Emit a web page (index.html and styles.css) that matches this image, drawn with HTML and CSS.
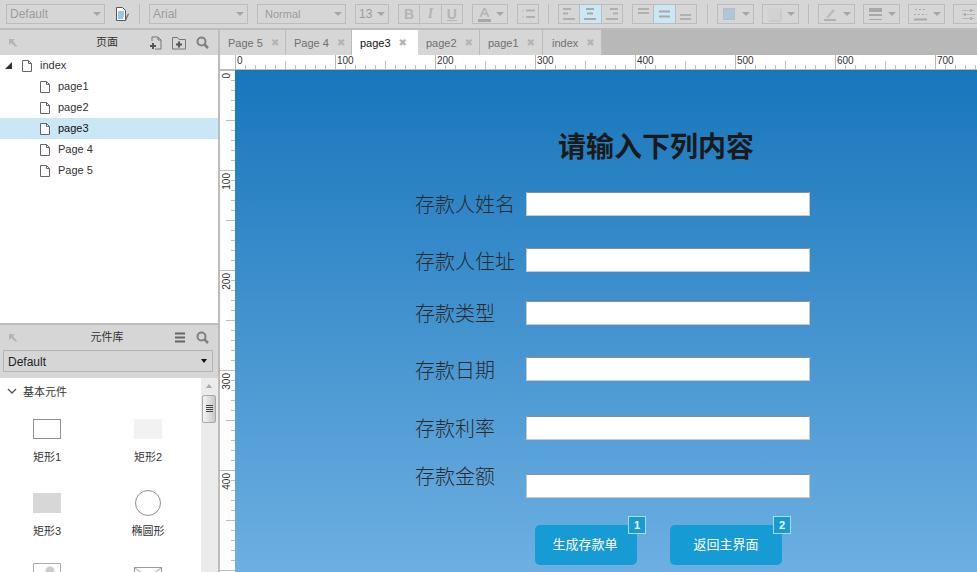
FILE: index.html
```html
<!DOCTYPE html>
<html>
  <head>
    <meta charset="utf-8">
    <link rel="stylesheet" href="styles.css">
  </head>
  <body>
    <div class="toolbar">
      <div class="select w-style">Default<i class="caret"></i></div>
      <svg class="doc-tool" width="16" height="16" viewBox="0 0 16 16"><path d="M2.500 1.500h6l3 3v10h-9z" fill="#fff" stroke="#555"/><path d="M4 6h6M4 8h6M4 10h6M4 12h5" stroke="#2b8fd0"/><path d="M11 14l3-6.500 1 .5-3 6.500z" fill="#666"/></svg>
      <div class="sep"></div>
      <div class="select w-font">Arial<i class="caret"></i></div>
      <div class="select w-weight">Normal<i class="caret"></i></div>
      <div class="select w-size">13<i class="caret"></i></div>
      <div class="btn-group">
        <div class="tb-btn bold">B</div>
        <div class="tb-btn italic">I</div>
        <div class="tb-btn under">U</div>
      </div>
      <div class="select w-color">
        <svg width="13" height="15" viewBox="0 0 13 15"><path d="M1.500 10l4-9h2l4 9H9.500l-1-2.500h-4L3.500 10zM5.200 6h2.600L6.500 2.800z" fill="#b4b4b4"/><path d="M0 12h13v3H0z" fill="#a8a8a8"/></svg>
        <i class="caret"></i>
      </div>
      <div class="tb-btn solo">
        <svg width="13" height="10" viewBox="0 0 13 10"><path d="M0 1.500h2M0 8h2" stroke="#a8d4e6" stroke-width="2"/><path d="M4 1.500h9M4 8h9" stroke="#b0b0b0" stroke-width="2"/></svg>
      </div>
      <div class="sep"></div>
      <div class="btn-group">
        <div class="tb-btn"><svg width="12" height="12" viewBox="0 0 12 12"><path d="M0 1h8M0 5.500h5M0 11h12" stroke="#b0b0b0" stroke-width="2"/></svg></div>
        <div class="tb-btn on"><svg width="12" height="12" viewBox="0 0 12 12"><path d="M2 1h8M3 5.500h6M0 11h12" stroke="#a8a8a8" stroke-width="2"/></svg></div>
        <div class="tb-btn"><svg width="12" height="12" viewBox="0 0 12 12"><path d="M4 1h8M7 5.500h5M0 11h12" stroke="#b0b0b0" stroke-width="2"/></svg></div>
      </div>
      <div class="btn-group">
        <div class="tb-btn"><svg width="11" height="12" viewBox="0 0 11 12"><path d="M0 1h11M0 5h11" stroke="#b0b0b0" stroke-width="2"/></svg></div>
        <div class="tb-btn on"><svg width="11" height="12" viewBox="0 0 11 12"><path d="M0 3.500h11M0 8.500h11" stroke="#a8a8a8" stroke-width="2"/></svg></div>
        <div class="tb-btn"><svg width="11" height="12" viewBox="0 0 11 12"><path d="M0 7h11M0 11h11" stroke="#b0b0b0" stroke-width="2"/></svg></div>
      </div>
      <div class="sep push"></div>
      <div class="select w-tool"><i class="swatch"></i><i class="caret"></i></div>
      <div class="select w-tool"><i class="swatch shadow"></i><i class="caret"></i></div>
      <div class="sep"></div>
      <div class="select w-tool">
        <svg width="13" height="13" viewBox="0 0 13 13"><path d="M3 8l6-7 2 1.500-6 7-3 1z" fill="#bdbdbd"/><path d="M0 11h12v2H0z" fill="#b0b0b0"/></svg>
        <i class="caret"></i>
      </div>
      <div class="select w-tool">
        <svg width="13" height="13" viewBox="0 0 13 13"><path d="M0 0h13v4H0zM0 6h13v2H0zM0 11h13v1H0z" fill="#a8a8a8"/></svg>
        <i class="caret"></i>
      </div>
      <div class="select w-tool">
        <svg width="13" height="13" viewBox="0 0 13 13"><path d="M1 1.500h11M0 6.500h13" stroke="#a8a8a8" stroke-dasharray="2 2"/><path d="M0 11.500h13" stroke="#a8a8a8" stroke-width="2"/></svg>
        <i class="caret"></i>
      </div>
      <div class="tb-btn solo last">
        <svg width="13" height="13" viewBox="0 0 13 13"><path d="M0 2.500h13M0 6.500h13M0 10.500h13" stroke="#b8b8b8"/><path d="M9 1v3M3 5v3M9 9v3" stroke="#b0b0b0" stroke-width="2"/></svg>
      </div>
    </div>

    <div class="main">
      <div class="sidebar">
        <div class="pages-panel">
          <div class="panel-head">
            <svg class="pin" width="10" height="10" viewBox="0 0 10 10"><path d="M1 1h6L5 3l4 5-1 1-5-4-2 2z" fill="#b4b4b4"/></svg>
            <span class="panel-title">页面</span>
            <div class="head-tools">
              <svg width="14" height="14" viewBox="0 0 14 14"><path d="M3 5V1h6l3 3v9H6" fill="none" stroke="#777"/><path d="M9 1v3h3" fill="none" stroke="#777"/><path d="M1 10h6M4 7v6" stroke="#555" stroke-width="2"/></svg>
              <svg width="14" height="14" viewBox="0 0 14 14"><path d="M.5 13V1.500h5l1.500 2h6.500V13z" fill="none" stroke="#777"/><path d="M4 8.500h6M7 5.500v6" stroke="#555" stroke-width="2"/></svg>
              <svg class="search" width="13" height="13" viewBox="0 0 13 13"><circle cx="5.500" cy="5.500" r="4" fill="none" stroke="#808080" stroke-width="2"/><path d="M8.500 8.500l3.500 3.500" stroke="#808080" stroke-width="2.500"/></svg>
            </div>
          </div>
          <div class="tree">
            <div class="tree-row root"><i class="tree-arrow"></i><svg width="10" height="12" viewBox="0 0 10 12"><path d="M.5.500h6l3 3v8h-9z" fill="#fff" stroke="#666"/><path d="M6.500.500v3h3" fill="none" stroke="#666"/></svg><span>index</span></div>
            <div class="tree-row"><svg width="10" height="12" viewBox="0 0 10 12"><path d="M.5.500h6l3 3v8h-9z" fill="#fff" stroke="#666"/><path d="M6.500.500v3h3" fill="none" stroke="#666"/></svg><span>page1</span></div>
            <div class="tree-row"><svg width="10" height="12" viewBox="0 0 10 12"><path d="M.5.500h6l3 3v8h-9z" fill="#fff" stroke="#666"/><path d="M6.500.500v3h3" fill="none" stroke="#666"/></svg><span>page2</span></div>
            <div class="tree-row selected"><svg width="10" height="12" viewBox="0 0 10 12"><path d="M.5.500h6l3 3v8h-9z" fill="#fff" stroke="#666"/><path d="M6.500.500v3h3" fill="none" stroke="#666"/></svg><span>page3</span></div>
            <div class="tree-row"><svg width="10" height="12" viewBox="0 0 10 12"><path d="M.5.500h6l3 3v8h-9z" fill="#fff" stroke="#666"/><path d="M6.500.500v3h3" fill="none" stroke="#666"/></svg><span>Page 4</span></div>
            <div class="tree-row"><svg width="10" height="12" viewBox="0 0 10 12"><path d="M.5.500h6l3 3v8h-9z" fill="#fff" stroke="#666"/><path d="M6.500.500v3h3" fill="none" stroke="#666"/></svg><span>Page 5</span></div>
          </div>
        </div>

        <div class="library-panel">
          <div class="panel-head">
            <svg class="pin" width="10" height="10" viewBox="0 0 10 10"><path d="M1 1h6L5 3l4 5-1 1-5-4-2 2z" fill="#b4b4b4"/></svg>
            <span class="panel-title">元件库</span>
            <div class="head-tools">
              <svg width="12" height="11" viewBox="0 0 12 11"><path d="M1 1.500h10M1 5.500h10M1 9.500h10" stroke="#666" stroke-width="2"/></svg>
              <svg class="search" width="13" height="13" viewBox="0 0 13 13"><circle cx="5.500" cy="5.500" r="4" fill="none" stroke="#808080" stroke-width="2"/><path d="M8.500 8.500l3.500 3.500" stroke="#808080" stroke-width="2.500"/></svg>
            </div>
          </div>
          <div class="lib-select-wrap">
            <div class="lib-select"><span>Default</span><i class="lib-caret"></i></div>
          </div>
          <div class="lib-body">
            <div class="lib-list">
              <div class="lib-group">
                <svg width="10" height="6" viewBox="0 0 10 6"><path d="M1 1l4 4 4-4" fill="none" stroke="#555" stroke-width="1.300"/></svg>
                基本元件
              </div>
              <div class="lib-grid">
                <div class="lib-item"><div class="thumb"><i class="shape rect1"></i></div>矩形1</div>
                <div class="lib-item"><div class="thumb"><i class="shape rect2"></i></div>矩形2</div>
                <div class="lib-item"><div class="thumb"><i class="shape rect3"></i></div>矩形3</div>
                <div class="lib-item"><div class="thumb"><i class="shape ellipse"></i></div>椭圆形</div>
                <div class="lib-item"><div class="thumb">
                  <svg width="28" height="28" viewBox="0 0 28 28"><path d="M.5.500h27v27H.5z" fill="#fff" stroke="#aaa"/><circle cx="17" cy="8" r="4.500" fill="#ccc"/></svg>
                </div></div>
                <div class="lib-item"><div class="thumb">
                  <svg width="28" height="20" viewBox="0 0 28 20"><path d="M.5.500h27v19H.5z" fill="#fff" stroke="#999"/><path d="M.5.500L14 11 27.500.500" fill="none" stroke="#999"/></svg>
                </div></div>
              </div>
            </div>
            <div class="scrollbar">
              <i class="scroll-up"></i>
              <div class="scroll-thumb"><i></i><i></i><i></i><i></i></div>
            </div>
          </div>
        </div>
      </div>

      <div class="workspace">
        <div class="tabs">
          <div class="tab">Page 5<span class="x">✖</span></div>
          <div class="tab">Page 4<span class="x">✖</span></div>
          <div class="tab active">page3<span class="x">✖</span></div>
          <div class="tab">page2<span class="x">✖</span></div>
          <div class="tab">page1<span class="x">✖</span></div>
          <div class="tab">index<span class="x">✖</span></div>
        </div>
        <div class="ruler-top">
          <div class="ruler-corner"></div>
          <div class="ruler-h">
            <span>0</span><span>100</span><span>200</span><span>300</span><span>400</span><span>500</span><span>600</span><span>700</span>
          </div>
        </div>
        <div class="stage">
          <div class="ruler-v">
            <span>0</span><span>100</span><span>200</span><span>300</span><span>400</span>
          </div>
          <div class="canvas">
            <h1 class="form-title">请输入下列内容</h1>
            <div class="field-label l1">存款人姓名</div><input class="field i1">
            <div class="field-label l2">存款人住址</div><input class="field i2">
            <div class="field-label l3">存款类型</div><input class="field i3">
            <div class="field-label l4">存款日期</div><input class="field i4">
            <div class="field-label l5">存款利率</div><input class="field i5">
            <div class="field-label l6">存款金额</div><input class="field i6">
            <div class="action a1">生成存款单<span class="note">1</span></div>
            <div class="action a2">返回主界面<span class="note">2</span></div>
          </div>
        </div>
      </div>
    </div>
  </body>
</html>
```

FILE: styles.css
```css
* {
  box-sizing: border-box;
}

body {
  margin: 0;
  width: 977px;
  height: 572px;
  overflow: hidden;
  background: #fff;
  color: #333;
  font-family: "Liberation Sans", "Noto Sans CJK SC", sans-serif;
  font-size: 11px;
}

i {
  display: block;
}

/* toolbar */
.toolbar {
  height: 30px;
  padding: 4px 0 0 6px;
  display: flex;
  align-items: flex-start;
  gap: 9px;
  overflow: hidden;
  background: #d6d6d6;
  border-bottom: 2px solid #bcbcbc;
}

.select {
  height: 20px;
  padding-left: 3px;
  display: flex;
  align-items: center;
  justify-content: space-between;
  flex-shrink: 0;
  border: 1px solid #bcbcbc;
  color: #9c9c9c;
  font-size: 12px;
}

.w-style { width: 99px; }
.w-font { width: 99px; }
.w-weight { width: 89px; padding-left: 7px; font-size: 11px; }
.w-size { width: 34px; }
.w-color { width: 36px; padding-left: 5px; }
.w-tool { width: 37px; padding-left: 5px; }

.w-tool + .w-tool {
  margin-left: -1px;
}

.caret {
  width: 0;
  height: 0;
  margin-right: 3px;
  border-left: 4px solid transparent;
  border-right: 4px solid transparent;
  border-top: 4px solid #a6a6a6;
}

.doc-tool {
  margin-top: 2px;
  flex-shrink: 0;
}

.sep {
  width: 1px;
  height: 20px;
  flex-shrink: 0;
  background: #bcbcbc;
}

.sep.push {
  margin-left: 1px;
}

.btn-group {
  width: 65px;
  display: flex;
  flex-shrink: 0;
  border: 1px solid #bcbcbc;
}

.tb-btn {
  flex: 1;
  height: 18px;
  display: flex;
  align-items: center;
  justify-content: center;
  border-left: 1px solid #bcbcbc;
  color: #b4b4b4;
  font-size: 14px;
  font-weight: bold;
}

.tb-btn:first-child {
  border-left: 0;
}

.tb-btn.on {
  background: #c9e7f5;
}

.tb-btn.solo {
  width: 22px;
  height: 20px;
  flex: none;
  border: 1px solid #bcbcbc;
}

.tb-btn.last {
  width: 30px;
  margin-left: -1px;
}

.italic {
  font-style: italic;
  font-family: "Liberation Serif", serif;
}

.under {
  text-decoration: underline;
}

.swatch {
  width: 12px;
  height: 12px;
  background: #a9c9da;
  border: 1px solid #bcbcbc;
}

.swatch.shadow {
  background: #d2d2d2;
  border: 0;
  box-shadow: 1px 1px 2px #c0c0c0;
}

/* layout */
.main {
  height: 542px;
  display: flex;
}

.sidebar {
  width: 220px;
  flex-shrink: 0;
  display: flex;
  flex-direction: column;
  border-right: 2px solid #bcbcbc;
}

.pages-panel {
  height: 295px;
  flex-shrink: 0;
  border-bottom: 2px solid #bcbcbc;
}

.panel-head {
  height: 25px;
  padding: 0 9px 0 5px;
  display: grid;
  grid-template-columns: 1fr auto 1fr;
  align-items: center;
  background: #d6d6d6;
}

.pin {
  margin-left: 3px;
}

.panel-title {
  padding-bottom: 3px;
  color: #333;
  font-size: 11px;
}

.head-tools {
  display: flex;
  align-items: center;
  justify-content: flex-end;
  gap: 9px;
}

.head-tools .search {
  margin-left: 1px;
}

.tree-row {
  height: 21px;
  padding-left: 40px;
  display: flex;
  align-items: center;
  gap: 8px;
  color: #333;
  font-size: 11px;
}

.tree-row span {
  padding-bottom: 1px;
}

.tree-row.root {
  padding-left: 5px;
}

.tree-row.selected {
  background: #c9e7f5;
  color: #111;
}

.tree-arrow {
  width: 0;
  height: 0;
  margin-right: 2px;
  border-left: 7px solid transparent;
  border-bottom: 7px solid #333;
}

.library-panel {
  flex: 1;
  min-height: 0;
  display: flex;
  flex-direction: column;
}

.lib-select-wrap {
  height: 28px;
  padding: 0 5px 6px 3px;
  background: #d6d6d6;
}

.lib-select {
  height: 22px;
  padding: 0 4px;
  display: flex;
  align-items: center;
  justify-content: space-between;
  border: 1px solid #b4b4b4;
  color: #222;
  font-size: 12px;
}

.lib-select span {
  padding-top: 1px;
}

.lib-caret {
  width: 0;
  height: 0;
  margin-right: 1px;
  border-left: 3.500px solid transparent;
  border-right: 3.500px solid transparent;
  border-top: 4px solid #111;
}

.lib-body {
  flex: 1;
  min-height: 0;
  display: flex;
  overflow: hidden;
}

.lib-list {
  flex: 1;
}

.lib-group {
  height: 26px;
  padding-left: 7px;
  display: flex;
  align-items: center;
  gap: 6px;
  color: #333;
}

.lib-grid {
  margin-top: 15px;
  display: grid;
  grid-template-columns: 94px 94px;
  column-gap: 7px;
  grid-auto-rows: 74px;
}

.lib-item {
  display: flex;
  flex-direction: column;
  align-items: center;
  color: #333;
  font-size: 11px;
}

.thumb {
  height: 20px;
  margin-bottom: 9px;
  display: flex;
  align-items: center;
  justify-content: center;
}

.thumb svg {
  flex-shrink: 0;
}

.shape {
  width: 28px;
  height: 20px;
  flex-shrink: 0;
}

.rect1 {
  background: #fff;
  border: 1px solid #8f8f8f;
}

.rect2 {
  background: #f2f2f2;
}

.rect3 {
  background: #d7d7d7;
}

.ellipse {
  width: 26px;
  height: 26px;
  background: #fff;
  border: 1px solid #8f8f8f;
  border-radius: 50%;
}

.scrollbar {
  width: 17px;
  flex-shrink: 0;
  padding: 6px 2px 0 1px;
  background: #ebebeb;
}

.scroll-up {
  width: 0;
  height: 0;
  margin: 0 auto 7px;
  border-left: 3px solid transparent;
  border-right: 3px solid transparent;
  border-bottom: 4px solid #a8a8a8;
}

.scroll-thumb {
  height: 28px;
  padding-top: 9px;
  border: 1px solid #a8a8a8;
  border-radius: 2px;
  background: linear-gradient(to right, #f4f4f4, #c8c8c8);
}

.scroll-thumb i {
  width: 7px;
  height: 1px;
  margin: 0 auto 1px 3px;
  background: #444;
}

/* tabs + rulers */
.workspace {
  flex: 1;
  min-width: 0;
  display: flex;
  flex-direction: column;
}

.tabs {
  height: 25px;
  flex-shrink: 0;
  display: flex;
  background: #b8b8b8;
}

.tab {
  height: 25px;
  padding-left: 8px;
  display: flex;
  align-items: center;
  background: #d6d6d6;
  border-right: 1px solid #bcbcbc;
  color: #707070;
  font-size: 11px;
}

.tab:nth-child(1), .tab:nth-child(2), .tab:nth-child(3) { width: 66px; }
.tab:nth-child(4) { width: 62px; }
.tab:nth-child(5) { width: 63px; }
.tab:nth-child(6) { width: 59px; padding-left: 9px; }

.tab.active {
  background: #fff;
  color: #111;
  border-right: 0;
}

.x {
  margin-left: 8px;
  color: #b4b4b4;
  font-family: "DejaVu Sans", sans-serif;
  font-size: 10px;
}

.ruler-top {
  height: 15px;
  flex-shrink: 0;
  display: flex;
  background: #fff;
  border-bottom: 1px solid #bcbcbc;
}

.ruler-corner {
  width: 15px;
  flex-shrink: 0;
}

.ruler-h {
  flex: 1;
  display: flex;
  overflow: hidden;
  background:
    repeating-linear-gradient(to right, #bcbcbc 0 1px, transparent 1px 100px) 0 0 / 100% 100% no-repeat,
    repeating-linear-gradient(to right, #bcbcbc 0 1px, transparent 1px 50px) 0 100% / 100% 8px no-repeat,
    repeating-linear-gradient(to right, #bcbcbc 0 1px, transparent 1px 10px) 0 100% / 100% 4px no-repeat;
}

.ruler-h span {
  width: 100px;
  flex-shrink: 0;
  padding: 1px 0 0 2px;
  color: #333;
  font-size: 10px;
  line-height: 10px;
}

.stage {
  flex: 1;
  min-height: 0;
  display: flex;
}

.ruler-v {
  width: 15px;
  flex-shrink: 0;
  display: grid;
  grid-auto-rows: 100px;
  overflow: hidden;
  background:
    repeating-linear-gradient(to bottom, #bcbcbc 0 1px, transparent 1px 100px) 0 0 / 100% 100% no-repeat,
    repeating-linear-gradient(to bottom, #bcbcbc 0 1px, transparent 1px 50px) 100% 0 / 9px 100% no-repeat,
    repeating-linear-gradient(to bottom, #bcbcbc 0 1px, transparent 1px 10px) 100% 0 / 4px 100% no-repeat;
}

.ruler-v span {
  margin: 3px 0 0 2px;
  justify-self: start;
  align-self: start;
  writing-mode: vertical-rl;
  transform: rotate(180deg);
  color: #333;
  font-size: 10px;
  line-height: 10px;
}

/* the wireframe page, widgets sit at their own canvas coordinates */
.canvas {
  position: relative;
  flex: 1;
  min-width: 0;
  overflow: hidden;
  background: linear-gradient(to bottom, #1876bb, #6dafe2);
}

.form-title {
  position: absolute;
  left: 323px;
  top: 56px;
  margin: 0;
  color: #1a1a1a;
  font-family: "Noto Sans CJK SC", sans-serif;
  font-size: 28px;
  font-weight: bold;
  line-height: 38px;
  white-space: nowrap;
}

.field-label {
  position: absolute;
  left: 180px;
  color: #2a2a2a;
  font-family: "Noto Sans CJK SC", sans-serif;
  font-size: 20px;
  font-weight: 300;
  line-height: 28px;
  white-space: nowrap;
}

.l1 { top: 120px; }
.l2 { top: 177px; }
.l3 { top: 229px; }
.l4 { top: 286px; }
.l5 { top: 344px; }
.l6 { top: 392px; }

.field {
  position: absolute;
  left: 291px;
  width: 284px;
  height: 24px;
  margin: 0;
  padding: 0;
  background: #fff;
  border: 1px solid #c8c8c8;
  border-top-color: #8c8c8c;
  border-radius: 0;
}

.i1 { top: 122px; }
.i2 { top: 178px; }
.i3 { top: 231px; }
.i4 { top: 287px; }
.i5 { top: 346px; }
.i6 { top: 404px; }

.action {
  position: absolute;
  top: 455px;
  height: 40px;
  padding-bottom: 3px;
  display: flex;
  align-items: center;
  justify-content: center;
  background: #169bd5;
  border-radius: 5px;
  color: #fff;
  font-family: "Noto Sans CJK SC", sans-serif;
  font-size: 13px;
}

.a1 { left: 300px; width: 102px; padding-right: 2px; }
.a2 { left: 435px; width: 112px; }

.note {
  position: absolute;
  top: -9px;
  right: -9px;
  width: 18px;
  height: 18px;
  display: flex;
  align-items: center;
  justify-content: center;
  background: #169bd5;
  border: 1px solid #a8dcf2;
  color: #fff;
  font-family: "Liberation Sans", sans-serif;
  font-size: 11px;
  font-weight: bold;
}
```
